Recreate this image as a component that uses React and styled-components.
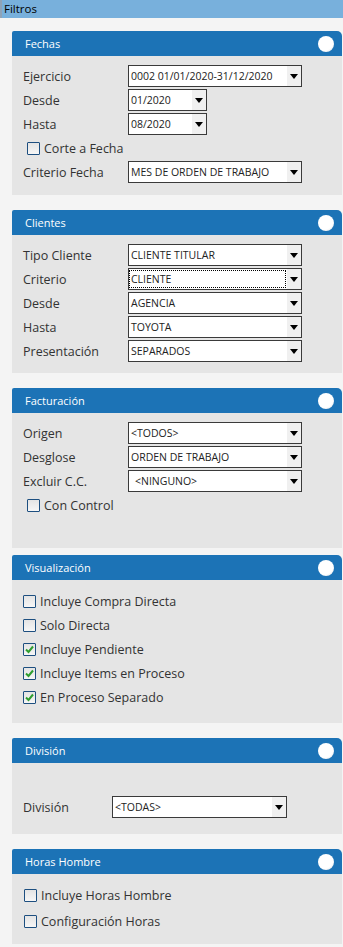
import React from "react";
import styled, { createGlobalStyle } from "styled-components";

const GlobalStyle = createGlobalStyle`
  html, body {
    margin: 0;
    padding: 0;
    background: #f4f4f4;
  }
  body {
    font-family: "Open Sans", "Liberation Sans", sans-serif;
  }
`;

const Page = styled.div`
  width: 343px;
  min-height: 947px;
  background: #f4f4f4;
`;

const TopBar = styled.div`
  height: 18px;
  line-height: 18px;
  background: #78b0dc;
  border-left: 2px solid #8fa3b8;
  padding-left: 2px;
  font-size: 11.5px;
  color: #000;
`;

const Panels = styled.div`
  padding: 13px 1px 0 12px;
`;

const Panel = styled.section`
  margin-bottom: ${props => props.after || 0}px;
`;

const Header = styled.div`
  height: 25px;
  box-sizing: border-box;
  background: #1c73b6;
  border-radius: 2px 5px 0 0;
  display: flex;
  align-items: center;
  justify-content: space-between;
  padding: 0 8px 0 13px;
  color: #fff;
  font-size: 11px;
`;

const Knob = styled.span`
  width: 16px;
  height: 16px;
  border-radius: 50%;
  background: radial-gradient(circle at 40% 35%, #fff 62%, #d4d8dc 100%);
`;

const Body = styled.div`
  height: ${props => props.h}px;
  box-sizing: border-box;
  padding: ${props => props.top}px 0 0 11px;
  background: #e5e5e5;
`;

const Row = styled.div`
  display: grid;
  grid-template-columns: ${props => props.col || 105}px auto;
  align-items: center;
  height: 22px;
  margin-bottom: 2px;
`;

const Label = styled.span`
  font-size: 12.5px;
  color: #333;
`;

const SelectBox = styled.div`
  width: ${props => props.w}px;
  height: 22px;
  box-sizing: border-box;
  border: 1px solid #3a3a3a;
  background: #fff;
  display: flex;
  align-items: stretch;
`;

const SelectText = styled.span`
  flex: 1;
  display: flex;
  align-items: center;
  margin: 2px 2px 2px 1px;
  padding-left: ${props => props.indent || 1}px;
  font-size: 10.5px;
  color: #222;
  white-space: nowrap;
  outline: ${props => (props.focused ? "1px dotted #000" : "none")};
`;

const Arrow = styled.span`
  width: 14px;
  background: #f0f0f0;
  display: flex;
  align-items: center;
  justify-content: center;
  &::after {
    content: "";
    border-left: 4px solid transparent;
    border-right: 4px solid transparent;
    border-top: 5px solid #000;
  }
`;

const CheckRow = styled.label`
  display: flex;
  align-items: center;
  height: 22px;
  margin-bottom: ${props => props.gap || 2}px;
  padding-left: ${props => props.indent || 0}px;
  font-size: 12.5px;
  color: #333;
`;

const Box = styled.span`
  width: 13px;
  height: 13px;
  box-sizing: border-box;
  border: 1px solid #1d4f80;
  border-radius: 1px;
  background: linear-gradient(#e4e4e4, #f6f6f6);
  margin-right: 4px;
  display: flex;
  align-items: center;
  justify-content: center;
`;

function Select({ value, w = 174, indent, focused }) {
  return (
    <SelectBox w={w}>
      <SelectText indent={indent} focused={focused}>
        {value}
      </SelectText>
      <Arrow />
    </SelectBox>
  );
}

function Field({ label, col, ...rest }) {
  return (
    <Row col={col}>
      <Label>{label}</Label>
      <Select {...rest} />
    </Row>
  );
}

function Check({ label, checked, indent, gap }) {
  return (
    <CheckRow indent={indent} gap={gap}>
      <Box>
        {checked && (
          <svg width="9" height="9" viewBox="0 0 9 9">
            <path d="M1 4.5 L3.5 7 L8 1.5" fill="none" stroke="#2f9e2f" strokeWidth="2" />
          </svg>
        )}
      </Box>
      {label}
    </CheckRow>
  );
}

function Section({ title, h, top, after, children }) {
  return (
    <Panel after={after}>
      <Header>
        {title}
        <Knob />
      </Header>
      <Body h={h} top={top}>
        {children}
      </Body>
    </Panel>
  );
}

export default function App() {
  return (
    <Page>
      <GlobalStyle />
      <TopBar>Filtros</TopBar>
      <Panels>
        <Section title="Fechas" h={139} top={9} after={15}>
          <Field label="Ejercicio" value="0002 01/01/2020-31/12/2020" />
          <Field label="Desde" value="01/2020" w={79} />
          <Field label="Hasta" value="08/2020" w={79} />
          <Check label="Corte a Fecha" indent={4} />
          <Field label="Criterio Fecha" value="MES DE ORDEN DE TRABAJO" />
        </Section>

        <Section title="Clientes" h={138} top={9} after={15}>
          <Field label="Tipo Cliente" value="CLIENTE TITULAR" />
          <Field label="Criterio" value="CLIENTE" focused />
          <Field label="Desde" value="AGENCIA" />
          <Field label="Hasta" value="TOYOTA" />
          <Field label="Presentación" value="SEPARADOS" />
        </Section>

        <Section title="Facturación" h={135} top={9} after={7}>
          <Field label="Origen" value="<TODOS>" />
          <Field label="Desglose" value="ORDEN DE TRABAJO" />
          <Field label="Excluir C.C." value="<NINGUNO>" indent={5} />
          <Check label="Con Control" indent={4} />
        </Section>

        <Section title="Visualización" h={143} top={10} after={15}>
          <Check label="Incluye Compra Directa" />
          <Check label="Solo Directa" />
          <Check label="Incluye Pendiente" checked />
          <Check label="Incluye Items en Proceso" checked />
          <Check label="En Proceso Separado" checked />
        </Section>

        <Section title="División" h={71} top={33} after={15}>
          <Field label="División" value="<TODAS>" col={89} w={175} />
        </Section>

        <Section title="Horas Hombre" h={70} top={10}>
          <Check label="Incluye Horas Hombre" indent={1} gap={4} />
          <Check label="Configuración Horas" indent={1} gap={4} />
        </Section>
      </Panels>
    </Page>
  );
}
